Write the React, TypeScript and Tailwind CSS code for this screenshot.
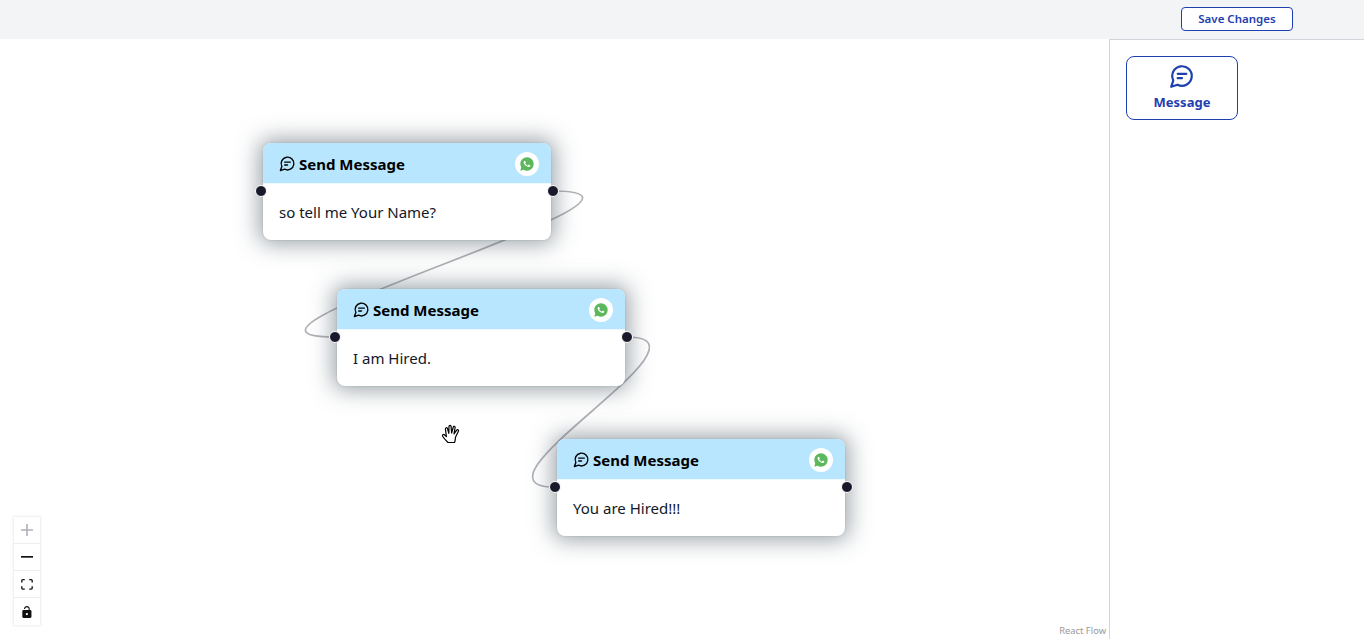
import React from "react";
import { RiWhatsappFill } from "react-icons/ri";

function Bubble({ className }: { className: string }) {
  return (
    <svg viewBox="0 0 24 24" fill="none" stroke="currentColor" strokeWidth="2" strokeLinecap="round" strokeLinejoin="round" className={className}>
      <path d="M7.9 20A9 9 0 1 0 4 16.1L2 22Z" />
      <path d="M8 10h8" />
      <path d="M8 14h4" />
    </svg>
  );
}

function Dot({ side }: { side: "left" | "right" }) {
  return (
    <span
      className={
        side === "left"
          ? "absolute left-[-8px] top-[42px] w-[12px] h-[12px] rounded-full bg-[#1a192b] border-[1.5px] border-white"
          : "absolute right-[-8px] top-[42px] w-[12px] h-[12px] rounded-full bg-[#1a192b] border-[1.5px] border-white"
      }
    />
  );
}

function FlowNode({ text, left, top }: { text: string; left: number; top: number }) {
  return (
    <div
      className="absolute w-[288px] h-[97px] rounded-lg bg-white shadow-[0_0_22px_4px_rgba(60,75,85,0.5),0_0_2px_rgba(60,75,85,0.25)]"
      style={{ left, top }}
    >
      <div className="h-[40px] rounded-t-lg bg-sky-200 flex items-center justify-between pl-[16px] pr-[12px] pt-[1px]">
        <div className="flex items-center gap-[3px]">
          <Bubble className="w-[17px] h-[17px] text-black" />
          <span className="text-[15px] font-bold text-black leading-6">Send Message</span>
        </div>
        <span className="w-[24px] h-[24px] rounded-full bg-white flex items-center justify-center">
          <RiWhatsappFill className="w-[16px] h-[16px] text-[#5cb85c]" />
        </span>
      </div>
      <div className="border-t border-sky-50 px-4 pt-[16px] text-[15px] leading-6 text-[#111827]">{text}</div>
      <Dot side="left" />
      <Dot side="right" />
    </div>
  );
}

function CtrlBtn({ children, last }: { children: React.ReactNode; last?: boolean }) {
  return (
    <div className={last ? "h-[27px] flex items-center justify-center bg-white" : "h-[27px] flex items-center justify-center bg-white border-b border-[#eeeeee]"}>
      {children}
    </div>
  );
}

export default function App() {
  return (
    <div className="w-[1364px] h-[639px] overflow-hidden flex flex-col bg-white font-['Noto_Sans',sans-serif]">
      <div className="h-[39px] bg-gray-100 flex items-start justify-end pr-[71px] pt-[7px] shrink-0">
        <button className="w-[112px] h-[24px] rounded bg-white border border-[#1e40af] text-[#1e40af] text-[11.5px] font-semibold">
          Save Changes
        </button>
      </div>
      <div className="flex-1 flex min-h-0">
        <div className="relative flex-1">
          <svg className="absolute inset-0 w-full h-full" fill="none" stroke="#b1b1b7" strokeWidth="1.7">
            <path d="M553 152C711 152 177 298 335 298" />
            <path d="M627 298C727 298 455 448 555 448" />
          </svg>
          <FlowNode text="so tell me Your Name?" left={263} top={104} />
          <FlowNode text="I am Hired." left={337} top={250} />
          <FlowNode text="You are Hired!!!" left={557} top={400} />
          <svg viewBox="0 0 20 20" className="absolute left-[441px] top-[385px] w-[20px] h-[20px]" fill="#ffffff" stroke="#000000" strokeWidth="1.2" strokeLinejoin="round" strokeLinecap="round">
            <path d="M7 18.5 C5.5 17 3 14.5 1.6 12.2 C1 11 2.4 10 3.4 10.8 L5.4 12.6 L4.4 5 C4.2 3.6 6 3.2 6.5 4.6 L7.8 9.4 L8 2.4 C8 1 10 1 10.1 2.4 L10.6 9 L12.3 3 C12.7 1.7 14.4 2.2 14.1 3.6 L13 9.8 L15.7 6.2 C16.5 5.1 18 6 17.4 7.2 L14.6 13 C14 15 14.6 16 13.5 18.5 Z" />
          </svg>
          <div className="absolute left-[14px] top-[478px] w-[26px] shadow-[0_0_2px_1px_rgba(0,0,0,0.08)]">
            <CtrlBtn>
              <svg viewBox="0 0 32 32" className="w-[12px] h-[12px] fill-[#b0b0b8]">
                <path d="M32 18.133H18.133V32h-4.266V18.133H0v-4.266h13.867V0h4.266v13.867H32z" />
              </svg>
            </CtrlBtn>
            <CtrlBtn>
              <svg viewBox="0 0 32 5" className="w-[12px] h-[2px] fill-[#111111]" preserveAspectRatio="none">
                <path d="M0 0h32v4.2H0z" />
              </svg>
            </CtrlBtn>
            <CtrlBtn>
              <svg viewBox="0 0 32 30" className="w-[12px] h-[11px] fill-[#111111]">
                <path d="M3.692 4.63c0-.53.4-.938.939-.938h5.215V0H4.708C2.13 0 0 2.054 0 4.63v5.216h3.692V4.631zM27.354 0h-5.2v3.692h5.17c.53 0 .984.4.984.939v5.215H32V4.631A4.624 4.624 0 0027.354 0zm.954 24.83c0 .532-.4.94-.939.94h-5.215v3.768h5.215c2.577 0 4.631-2.13 4.631-4.707v-5.139h-3.692v5.139zm-23.677.94c-.531 0-.939-.4-.939-.94v-5.138H0v5.139c0 2.577 2.13 4.707 4.708 4.707h5.138V25.77H4.631z" />
              </svg>
            </CtrlBtn>
            <CtrlBtn last>
              <svg viewBox="0 0 25 32" className="w-[10px] h-[12px] fill-[#111111]">
                <path d="M21.333 10.667H19.81V7.619C19.81 3.429 16.38 0 12.19 0c-4.114 0-7.619 3.429-7.619 7.619v.381h3.048v-.381c0-2.59 1.981-4.571 4.571-4.571s4.571 1.981 4.571 4.571v3.048H3.048A3.056 3.056 0 000 13.714v15.238A3.056 3.056 0 003.048 32h18.285a3.056 3.056 0 003.048-3.048V13.714a3.056 3.056 0 00-3.048-3.047zM12.19 24.533a3.056 3.056 0 01-3.047-3.047 3.056 3.056 0 013.047-3.048 3.056 3.056 0 013.048 3.048 3.056 3.056 0 01-3.048 3.047z" />
              </svg>
            </CtrlBtn>
          </div>
          <div className="absolute right-[2px] bottom-[1px] text-[9.4px] leading-[14px] text-[#999999] bg-white px-[1px]">React Flow</div>
        </div>
        <div className="w-[255px] shrink-0 border-l border-t border-gray-300 pl-4 pt-4">
          <div className="w-[112px] h-[64px] rounded-lg border border-[#1e40af] text-[#1e40af] flex flex-col items-center pt-[6px]">
            <Bubble className="w-[26px] h-[26px]" />
            <span className="text-[13px] font-bold leading-5 mt-[3px]">Message</span>
          </div>
        </div>
      </div>
    </div>
  );
}
